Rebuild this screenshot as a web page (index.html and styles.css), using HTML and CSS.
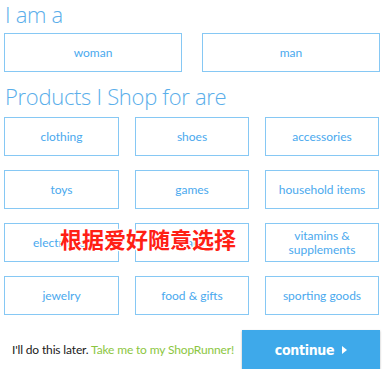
FILE: index.html
```html
<!DOCTYPE html>
<html>
<head>
<meta charset="utf-8">
<link rel="stylesheet" href="styles.css">
</head>
<body>
<div class="page">
  <h1 class="title title-first">I am a</h1>
  <div class="gender">
    <div class="opt">woman</div>
    <div class="opt">man</div>
  </div>
  <h1 class="title title-second">Products I Shop for are</h1>
  <div class="products">
    <div class="opt">clothing</div>
    <div class="opt">shoes</div>
    <div class="opt">accessories</div>
    <div class="opt">toys</div>
    <div class="opt">games</div>
    <div class="opt">household items</div>
    <div class="opt">electronics</div>
    <div class="opt">beauty</div>
    <div class="opt">vitamins &amp;<br>supplements</div>
    <div class="opt">jewelry</div>
    <div class="opt">food &amp; gifts</div>
    <div class="opt">sporting goods</div>
    <div class="overlay">根据爱好随意选择</div>
  </div>
  <div class="footer">
    <p class="later">I'll do this later. <span class="link">Take me to my ShopRunner!</span></p>
    <div class="continue">continue <span class="arrow"></span></div>
  </div>
</div>
</body>
</html>
```
FILE: styles.css
```css
html, body {
  margin: 0;
  padding: 0;
  background: #ffffff;
}
.page {
  width: 376px;
  padding: 0 0 0 4px;
  font-family: "Lato", "Open Sans", sans-serif;
}
.title {
  margin: 0;
  font-family: "Open Sans", sans-serif;
  font-weight: 300;
  font-size: 22px;
  color: #5aaeea;
  letter-spacing: -0.3px;
  padding-left: 1px;
}
.title-first {
  height: 33px;
  line-height: 28px;
}
.title-second {
  height: 45px;
  line-height: 48px;
}
.opt {
  box-sizing: border-box;
  border: 1px solid #86c8f4;
  color: #4aa9ee;
  font-size: 12px;
  display: flex;
  align-items: center;
  justify-content: center;
  text-align: center;
  line-height: 14px;
}
.gender {
  display: grid;
  grid-template-columns: 178px 178px;
  column-gap: 20px;
}
.gender .opt {
  height: 39px;
}
.products {
  position: relative;
  display: grid;
  grid-template-columns: 115px 114px 114px;
  column-gap: 16px;
  row-gap: 14px;
  grid-auto-rows: 39px;
  margin-bottom: 15px;
}
.overlay {
  position: absolute;
  left: 56px;
  top: 108px;
  font-family: "Noto Sans CJK SC", sans-serif;
  font-weight: 700;
  font-size: 22px;
  line-height: 26px;
  color: #ff2014;
  white-space: nowrap;
  text-shadow: -1px -1px 0 #fff, 1px -1px 0 #fff, -1px 1px 0 #fff, 1px 1px 0 #fff, 0 0 3px #fff;
}
.footer {
  display: flex;
  align-items: center;
  justify-content: space-between;
}
.later {
  margin: 0 0 0 8px;
  font-size: 12px;
  letter-spacing: -0.15px;
  color: #1a1a1a;
  white-space: nowrap;
}
.link {
  color: #8cc63f;
}
.continue {
  flex: none;
  width: 138px;
  height: 39px;
  background: #3ea9ea;
  color: #ffffff;
  display: flex;
  align-items: center;
  justify-content: center;
  font-family: "DejaVu Sans Condensed", "DejaVu Sans", sans-serif;
  font-weight: 700;
  font-size: 14px;
  letter-spacing: -0.3px;
  box-shadow: 0 1px 2px rgba(0,0,0,0.3);
}
.arrow {
  display: inline-block;
  width: 0;
  height: 0;
  margin-left: 8px;
  border-top: 4px solid transparent;
  border-bottom: 4px solid transparent;
  border-left: 5px solid #ffffff;
}
```
